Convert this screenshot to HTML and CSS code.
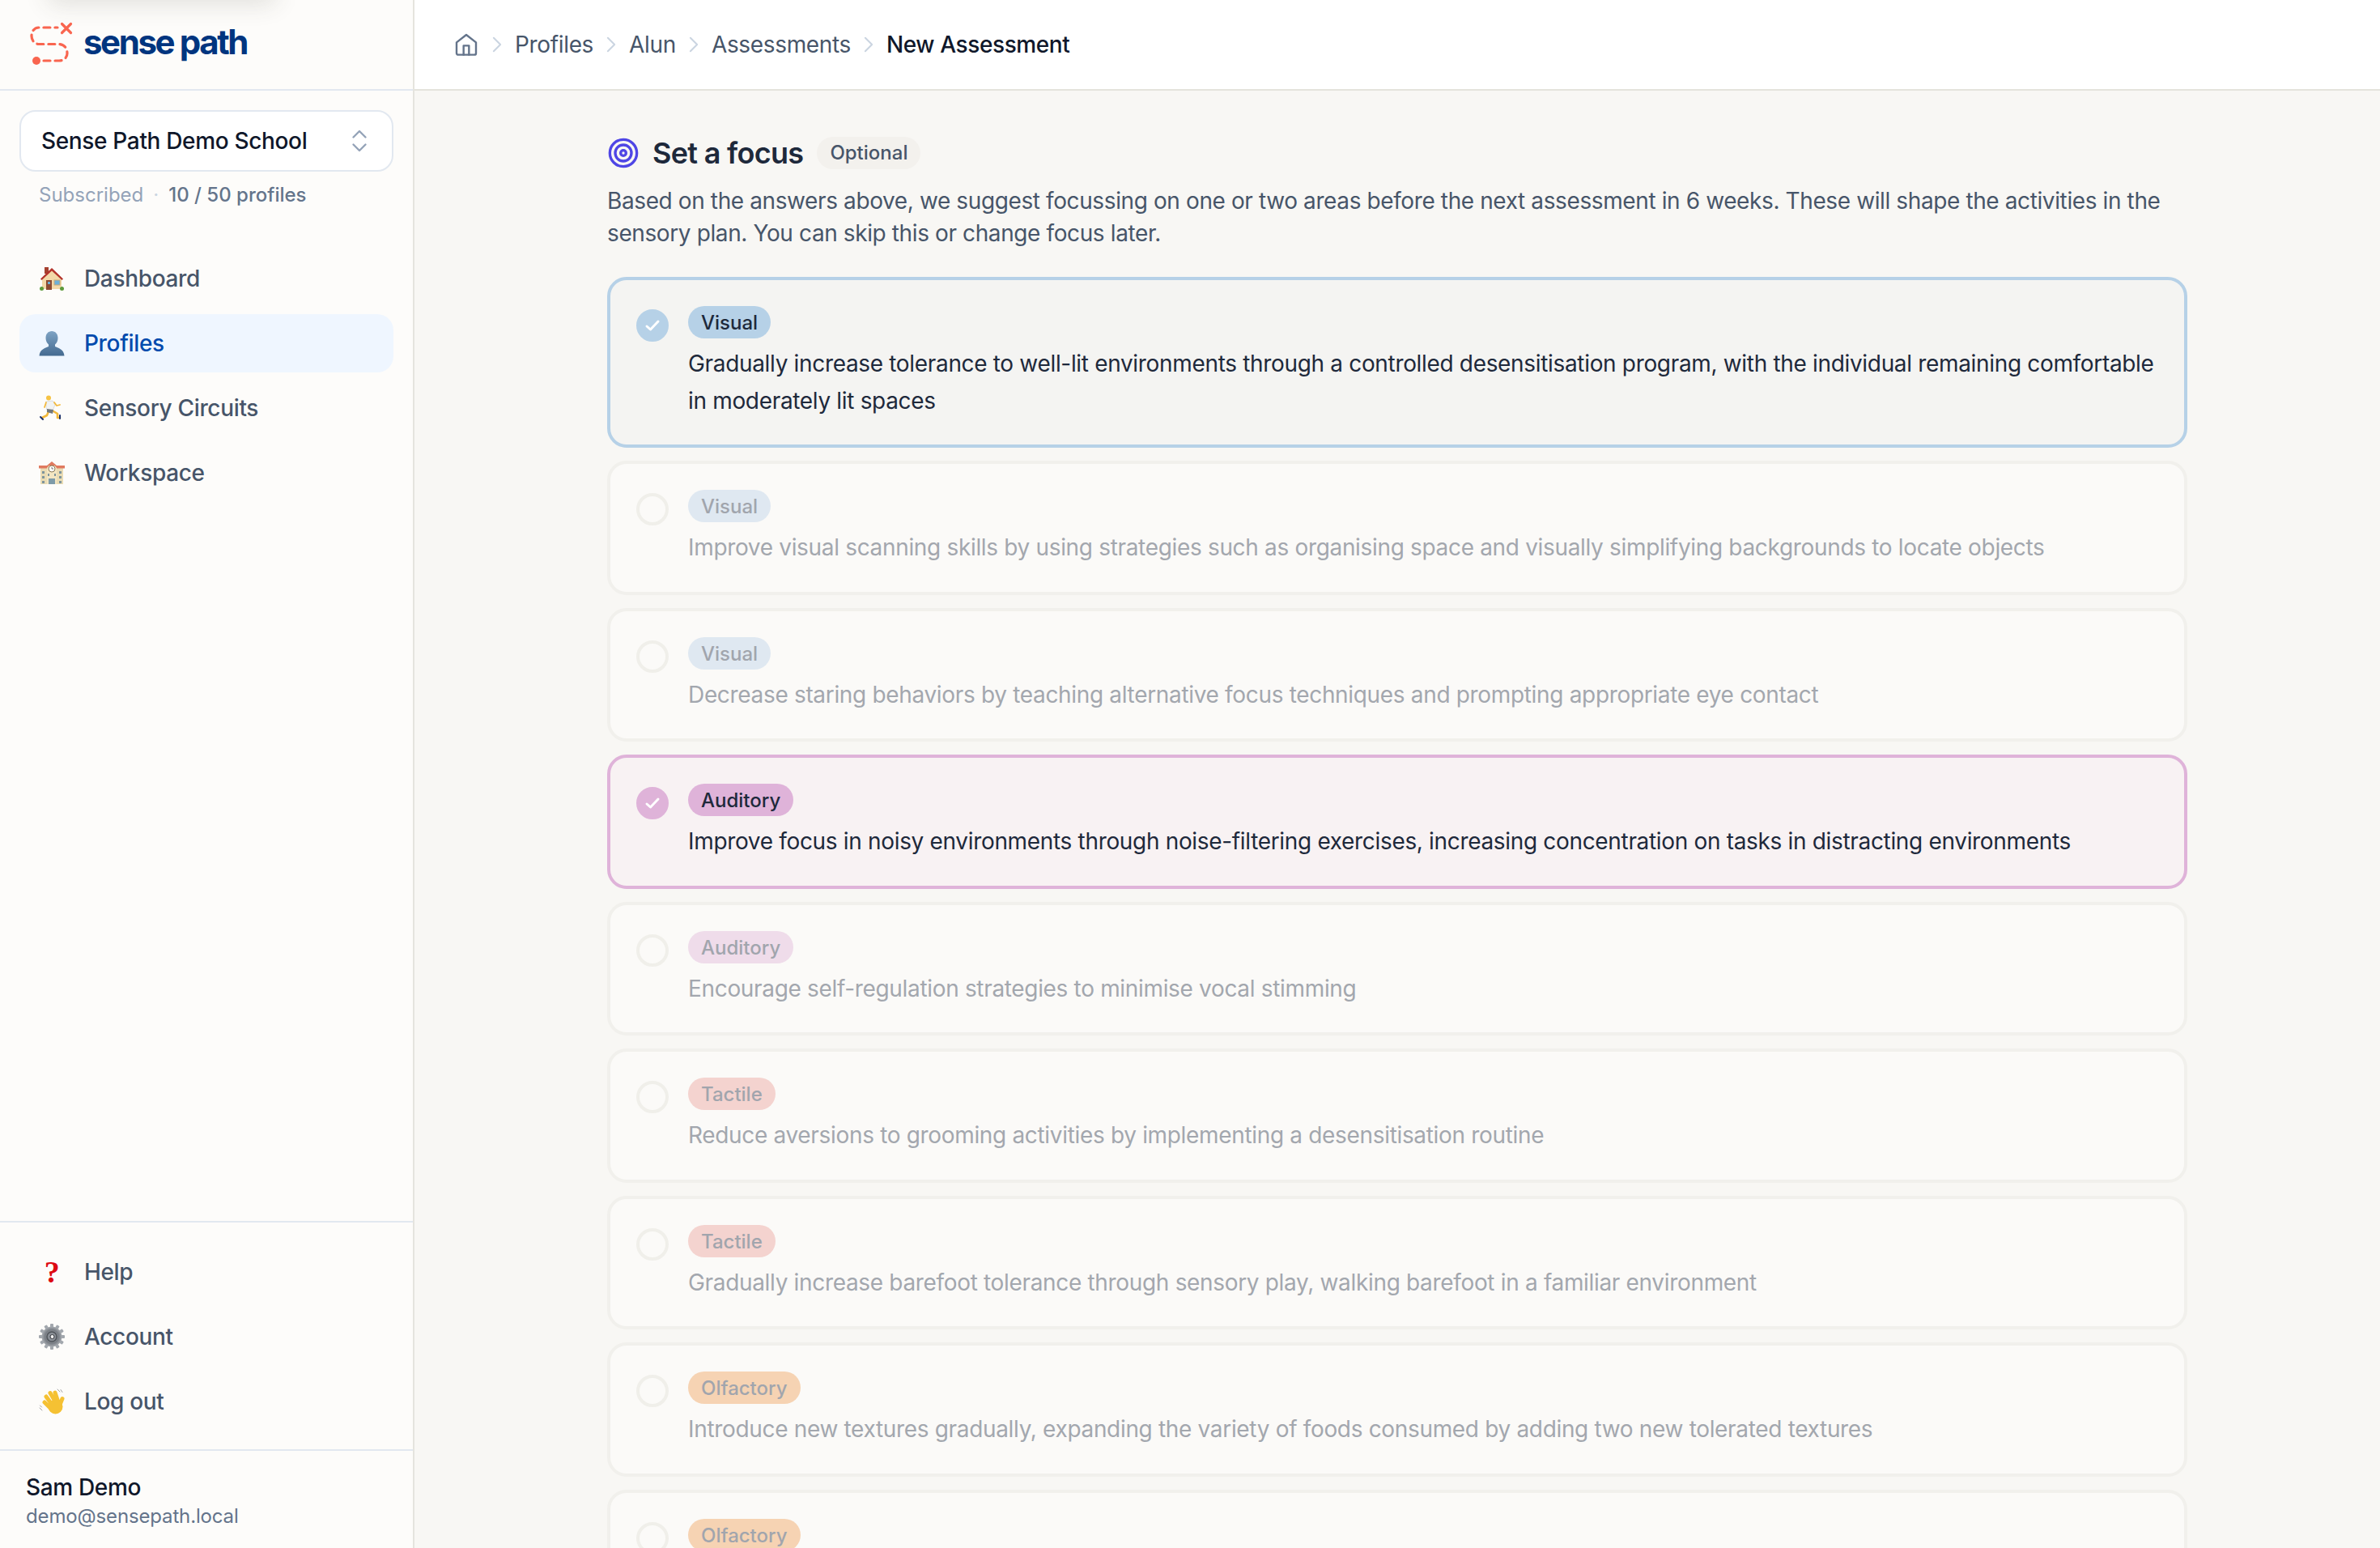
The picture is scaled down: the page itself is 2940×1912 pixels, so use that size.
FILE: index.html
```html
<!DOCTYPE html>
<html lang="en">
<head>
    <meta charset="UTF-8">
    <title>New Assessment - Sense Path</title>
    <link rel="stylesheet" href="styles.css">
</head>
<body>
    <div class="app">
        <aside class="sidebar">
            <div class="top-shadow"></div>
            <div class="logo">
                <svg class="logo-mark" width="60" height="60" viewBox="34 26 60 60" fill="none" stroke="#f9654f" stroke-width="3.2" stroke-linecap="round">
                    <circle cx="45" cy="76" r="5" fill="#f9654f" stroke="none"/>
                    <path stroke-dasharray="8 6" d="M54 76H73C79 76 83 72 83 67C83 60 79 55.500 72 55.500H48C43 55.500 39 51 39 45.500C39 39 43 35 48 35H71"/>
                    <path d="M76.500 30.500L87.500 41.500M87.500 30.500L76.500 41.500"/>
                </svg>
                <span class="logo-text">sense path</span>
            </div>

            <div class="school">
                <button class="school-select">
                    <span>Sense Path Demo School</span>
                    <svg width="36" height="36" viewBox="0 0 24 24" fill="none" stroke="#94a3b8" stroke-width="1.600" stroke-linecap="round" stroke-linejoin="round"><path d="m7 15 5 5 5-5"/><path d="m7 9 5-5 5 5"/></svg>
                </button>
                <p class="plan"><span class="plan-status">Subscribed</span><span class="plan-dot">·</span><span class="plan-count">10 / 50 profiles</span></p>
            </div>

            <nav class="nav">
                <a class="nav-item">
                    <svg class="nav-icon" viewBox="0 0 32 32">
                        <path d="M4 15L16 5l12 10v14H4z" fill="#f3d8a8"/>
                        <rect x="7" y="2" width="5" height="8" fill="#a5402f"/>
                        <path d="M2 16.500L16 3l14 13.500-1.500 1.500L16 6.500 3.500 18z" fill="#b3322a"/>
                        <rect x="9" y="18" width="7" height="12" fill="#8c4a32"/>
                        <rect x="11" y="20" width="3" height="3" fill="#6db0d8"/>
                        <rect x="19" y="18" width="7" height="6" fill="#6db0d8" stroke="#c9a777"/>
                        <circle cx="3.500" cy="28.500" r="2.500" fill="#5d9a3c"/>
                        <circle cx="28.500" cy="28.500" r="2.500" fill="#5d9a3c"/>
                    </svg>
                    Dashboard
                </a>
                <a class="nav-item active">
                    <svg class="nav-icon" viewBox="0 0 32 32">
                        <defs><linearGradient id="bust" x1="0" y1="0" x2="0" y2="1"><stop offset="0" stop-color="#7ea3c4"/><stop offset="1" stop-color="#446a90"/></linearGradient></defs>
                        <path d="M16 1c4.500 0 7.500 3.500 7.500 8.500 0 3.500-1.500 6.500-3.500 8v2.500c3 1.500 11 3 11.500 11.500H.5C1 23 9 21.500 12 20v-2.500c-2-1.500-3.500-4.500-3.500-8C8.500 4.500 11.500 1 16 1z" fill="url(#bust)"/>
                    </svg>
                    Profiles
                </a>
                <a class="nav-item">
                    <svg class="nav-icon" viewBox="0 0 32 32" fill="none" stroke-linecap="round" stroke-linejoin="round">
                        <circle cx="12" cy="3.500" r="3" fill="#f6c344"/>
                        <path d="M9 8l8-1 3 5-3 7-7-1z" fill="#f1f3f4" stroke="#c9cdd2" stroke-width=".6"/>
                        <path d="M19 9l3 4 4-1M9 9l-2 6" stroke="#f3b93c" stroke-width="1.800"/>
                        <path d="M12 20l-2 5-6 3M18 20l5 3 0 5 3 0" stroke="#f3b93c" stroke-width="2.600"/>
                        <path d="M10 17l8 1-1 5-7-2z" fill="#72777c"/>
                        <path d="M2 27l3 3M26 25v4" stroke="#1c2f6b" stroke-width="2"/>
                    </svg>
                    Sensory Circuits
                </a>
                <a class="nav-item">
                    <svg class="nav-icon" viewBox="0 0 32 32">
                        <rect x="2" y="8" width="28" height="22" fill="#eadcb4"/>
                        <path d="M0 7h32v3.500H0z" fill="#e07a5f"/>
                        <path d="M10 10L16 3l6 7v20H10z" fill="#f3e6c2"/>
                        <path d="M10 7l6-5 6 5z" fill="#e07a5f"/>
                        <circle cx="16" cy="11" r="4" fill="#fff" stroke="#8b7a55"/>
                        <path d="M16 9v2h2" stroke="#555" fill="none" stroke-width=".8"/>
                        <rect x="12" y="23" width="8" height="7" fill="#7e9ba8"/>
                        <path d="M4 14h3v3H4zm0 6h3v3H4zm0 6h3v3H4zm21-12h3v3h-3zm0 6h3v3h-3zm0 6h3v3h-3zM11 17h2v3h-2zm8 0h2v3h-2z" fill="#7f959c"/>
                    </svg>
                    Workspace
                </a>
            </nav>

            <div class="nav nav-bottom">
                <a class="nav-item"><span class="nav-icon help-mark">?</span>Help</a>
                <a class="nav-item">
                    <svg class="nav-icon" viewBox="0 0 32 32">
                        <defs><radialGradient id="gear" cx=".5" cy=".5" r=".6"><stop offset="0" stop-color="#b8bcc1"/><stop offset=".55" stop-color="#777c83"/><stop offset="1" stop-color="#c4c8cc"/></radialGradient></defs>
                        <g fill="#a2a7ad">
                            <rect x="14" y="0" width="4" height="32" rx="1"/>
                            <rect x="14" y="0" width="4" height="32" rx="1" transform="rotate(30 16 16)"/>
                            <rect x="14" y="0" width="4" height="32" rx="1" transform="rotate(60 16 16)"/>
                            <rect x="14" y="0" width="4" height="32" rx="1" transform="rotate(90 16 16)"/>
                            <rect x="14" y="0" width="4" height="32" rx="1" transform="rotate(120 16 16)"/>
                            <rect x="14" y="0" width="4" height="32" rx="1" transform="rotate(150 16 16)"/>
                        </g>
                        <circle cx="16" cy="16" r="12.500" fill="url(#gear)"/>
                        <circle cx="16" cy="16" r="6" fill="#8a8f96" stroke="#4f545a" stroke-width="1.500"/>
                        <circle cx="16.500" cy="16" r="2.500" fill="#f2f2f2" stroke="#33373c"/>
                    </svg>
                    Account
                </a>
                <a class="nav-item">
                    <svg class="nav-icon" viewBox="0 0 32 32" fill="none" stroke-linecap="round">
                        <path d="M7 17l7 7M9 10l8 11M14 5.500l7 12M20 5l4 12M26 20l3-7.500" stroke="#f5c133" stroke-width="5"/>
                        <circle cx="20.500" cy="22.500" r="9" fill="#f5c133"/>
                        <path d="M1 24l3 3M1.500 21l2 2M23 1l3 3M27 1.500l2 3" stroke="#8a8a8a" stroke-width=".8"/>
                    </svg>
                    Log out
                </a>
            </div>

            <div class="user">
                <div class="user-name">Sam Demo</div>
                <div class="user-email">demo@sensepath.local</div>
            </div>
        </aside>

        <div class="page">
            <header class="topbar">
                <svg class="crumb-home" width="32" height="32" viewBox="0 0 24 24" fill="none" stroke="#64748b" stroke-width="1.800" stroke-linejoin="round" stroke-linecap="round"><path d="M3 10l9-7 9 7v10a1.500 1.500 0 0 1-1.500 1.500h-15A1.500 1.500 0 0 1 3 20z"/><path d="M9.500 21.500V13h5v8.500"/></svg>
                <svg width="22" height="22" viewBox="4 4 16 16" fill="none" stroke="#cbd5e1" stroke-width="1.500" stroke-linecap="round" stroke-linejoin="round"><path d="m9 6 6 6-6 6"/></svg>
                <a class="crumb">Profiles</a>
                <svg width="22" height="22" viewBox="4 4 16 16" fill="none" stroke="#cbd5e1" stroke-width="1.500" stroke-linecap="round" stroke-linejoin="round"><path d="m9 6 6 6-6 6"/></svg>
                <a class="crumb">Alun</a>
                <svg width="22" height="22" viewBox="4 4 16 16" fill="none" stroke="#cbd5e1" stroke-width="1.500" stroke-linecap="round" stroke-linejoin="round"><path d="m9 6 6 6-6 6"/></svg>
                <a class="crumb">Assessments</a>
                <svg width="22" height="22" viewBox="4 4 16 16" fill="none" stroke="#cbd5e1" stroke-width="1.500" stroke-linecap="round" stroke-linejoin="round"><path d="m9 6 6 6-6 6"/></svg>
                <span class="crumb current">New Assessment</span>
            </header>

            <main class="content">
                <div class="section-head">
                    <svg width="40" height="40" viewBox="0 0 24 24" fill="none" stroke="#4f46e5" stroke-width="2"><circle cx="12" cy="12" r="10"/><circle cx="12" cy="12" r="6"/><circle cx="12" cy="12" r="2"/></svg>
                    <h2>Set a focus</h2>
                    <span class="optional">Optional</span>
                </div>
                <p class="intro">Based on the answers above, we suggest focussing on one or two areas before the next assessment in 6 weeks. These will shape the activities in the sensory plan. You can skip this or change focus later.</p>

                <div class="goals">
                    <div class="goal visual selected">
                        <span class="tick"><svg width="24" height="24" viewBox="0 0 24 24" fill="none" stroke="#fff" stroke-width="3" stroke-linecap="round" stroke-linejoin="round"><path d="M5 13l4.500 4L19 7"/></svg></span>
                        <div class="goal-body"><span class="tag">Visual</span><p>Gradually increase tolerance to well-lit environments through a controlled desensitisation program, with the individual remaining comfortable in moderately lit spaces</p></div>
                    </div>
                    <div class="goal visual">
                        <span class="tick"></span>
                        <div class="goal-body"><span class="tag">Visual</span><p>Improve visual scanning skills by using strategies such as organising space and visually simplifying backgrounds to locate objects</p></div>
                    </div>
                    <div class="goal visual">
                        <span class="tick"></span>
                        <div class="goal-body"><span class="tag">Visual</span><p>Decrease staring behaviors by teaching alternative focus techniques and prompting appropriate eye contact</p></div>
                    </div>
                    <div class="goal auditory selected">
                        <span class="tick"><svg width="24" height="24" viewBox="0 0 24 24" fill="none" stroke="#fff" stroke-width="3" stroke-linecap="round" stroke-linejoin="round"><path d="M5 13l4.500 4L19 7"/></svg></span>
                        <div class="goal-body"><span class="tag">Auditory</span><p>Improve focus in noisy environments through noise-filtering exercises, increasing concentration on tasks in distracting environments</p></div>
                    </div>
                    <div class="goal auditory">
                        <span class="tick"></span>
                        <div class="goal-body"><span class="tag">Auditory</span><p>Encourage self-regulation strategies to minimise vocal stimming</p></div>
                    </div>
                    <div class="goal tactile">
                        <span class="tick"></span>
                        <div class="goal-body"><span class="tag">Tactile</span><p>Reduce aversions to grooming activities by implementing a desensitisation routine</p></div>
                    </div>
                    <div class="goal tactile">
                        <span class="tick"></span>
                        <div class="goal-body"><span class="tag">Tactile</span><p>Gradually increase barefoot tolerance through sensory play, walking barefoot in a familiar environment</p></div>
                    </div>
                    <div class="goal olfactory">
                        <span class="tick"></span>
                        <div class="goal-body"><span class="tag">Olfactory</span><p>Introduce new textures gradually, expanding the variety of foods consumed by adding two new tolerated textures</p></div>
                    </div>
                    <div class="goal olfactory">
                        <span class="tick"></span>
                        <div class="goal-body"><span class="tag">Olfactory</span></div>
                    </div>
                </div>
            </main>
        </div>
    </div>
</body>
</html>
```

FILE: styles.css
```css
*{margin:0;padding:0;box-sizing:border-box;}
html,body{height:100%;overflow:hidden;}
body{
    font-family:Inter,"Noto Sans",sans-serif;
    font-size:28px;
    letter-spacing:-.34px;
    color:#0f172a;
    background:#f8f7f4;
}
p{margin:0;}
.app{display:flex;height:100vh;}

/* sidebar */
.sidebar{
    position:relative;
    display:flex;
    flex-direction:column;
    width:512px;
    flex:none;
    background:#fdfcfa;
    border-right:2px solid #e5e4de;
    overflow:hidden;
}
.top-shadow{
    position:absolute;
    top:-30px;
    left:60px;
    width:280px;
    height:30px;
    box-shadow:0 4px 30px rgba(60,60,50,.16);
}
.logo{
    display:flex;
    align-items:center;
    gap:9px;
    height:112px;
    padding-left:34px;
    border-bottom:2px solid #e2e8f0;
    flex:none;
}
.logo-mark{flex:none;}
.logo-text{
    font-size:42px;
    font-weight:700;
    letter-spacing:-2.400px;
    color:#00357f;
    line-height:1;
    margin-bottom:6px;
}
.school{padding:24px 24px 0;}
.school-select{
    display:flex;
    align-items:center;
    justify-content:space-between;
    width:100%;
    height:76px;
    padding:0 22px 0 25px;
    background:#fff;
    border:2px solid #e2e8f0;
    border-radius:20px;
    font:500 28px Inter,sans-serif;
    letter-spacing:-.34px;
    color:#0f172a;
}
.plan{
    display:flex;
    align-items:center;
    padding:13px 0 0 24px;
    font-size:24px;
    line-height:32px;
    letter-spacing:0;
}
.plan-status{color:#94a3b8;}
.plan-dot{color:#cbd5e1;margin:0 12px;}
.plan-count{color:#64748b;font-weight:500;}

.nav{display:flex;flex-direction:column;gap:8px;padding:51px 24px 0;}
.nav-item{
    display:flex;
    align-items:center;
    gap:24px;
    height:72px;
    padding:0 24px;
    border-radius:20px;
    color:#475569;
    font-weight:500;
}
.nav-item.active{background:#eff6ff;color:#004aad;}
.nav-icon{width:32px;height:32px;flex:none;}
.help-mark{
    font:700 38px/32px "Liberation Serif",serif;
    color:#dd0a12;
    text-align:center;
}
.nav-bottom{
    margin-top:auto;
    padding:25px 24px 23px;
    border-top:2px solid #e2e8f0;
}
.user{
    padding:25px 32px 0;
    height:122px;
    border-top:2px solid #e2e8f0;
    flex:none;
}
.user-name{font-weight:500;line-height:40px;}
.user-email{font-size:24px;line-height:32px;letter-spacing:-.15px;color:#64748b;}

/* page */
.page{flex:1;display:flex;flex-direction:column;min-width:0;}
.topbar{
    display:flex;
    align-items:center;
    gap:11px;
    height:112px;
    flex:none;
    padding-left:48px;
    background:#fff;
    border-bottom:2px solid #e4e3dc;
}
.crumb{color:#475569;}
.crumb.current{color:#0f172a;font-weight:500;letter-spacing:-.4px;}
.content{
    width:2048px;
    margin:0 auto;
    padding:57px 48px 0;
    overflow:hidden;
}
.section-head{display:flex;align-items:center;height:40px;}
.section-head h2{
    margin-left:16px;
    font-size:36px;
    font-weight:600;
    letter-spacing:-.7px;
    color:#1e293b;
}
.optional{
    margin-left:17px;
    padding:0 16px;
    line-height:40px;
    border-radius:20px;
    background:#f3f1ed;
    font-size:24px;
    font-weight:450;
    letter-spacing:0;
    color:#475569;
}
.intro{margin-top:19px;line-height:40px;letter-spacing:-.39px;color:#475569;}

.goals{display:flex;flex-direction:column;gap:16px;margin-top:34px;}
.goal{
    display:flex;
    gap:24px;
    padding:32px 32px 31px;
    background:#fbfaf8;
    border:4px solid #f1f0ec;
    border-radius:24px;
}
.tick{
    display:flex;
    align-items:center;
    justify-content:center;
    width:40px;
    height:40px;
    margin-top:4px;
    flex:none;
    border:4px solid #f0efea;
    border-radius:50%;
}
.goal-body{flex:1;min-width:0;}
.tag{
    display:block;
    width:max-content;
    height:40px;
    padding:0 16px;
    font-size:24px;
    font-weight:450;
    letter-spacing:0;
    line-height:41px;
    border-radius:20px;
    color:#a1a5ad;
}
.goal-body p{margin-top:9px;line-height:45.500px;letter-spacing:-.33px;color:#a3a7ae;}
.visual .tag{background:#dfe8f1;}
.auditory .tag{background:#efdcea;}
.tactile .tag{background:#f4d3cf;}
.olfactory .tag{background:#f6d3b3;}

.goal.selected .tag{color:#1e293b;}
.goal.selected p{color:#1e293b;}
.visual.selected{background:#f4f4f2;border-color:#b6d1e7;}
.visual.selected .tag,.visual.selected .tick{background:#b6d1e7;border-color:#b6d1e7;}
.auditory.selected{background:#f8f2f3;border-color:#dfb3d9;}
.auditory.selected .tag,.auditory.selected .tick{background:#dfb3d9;border-color:#dfb3d9;}
```
